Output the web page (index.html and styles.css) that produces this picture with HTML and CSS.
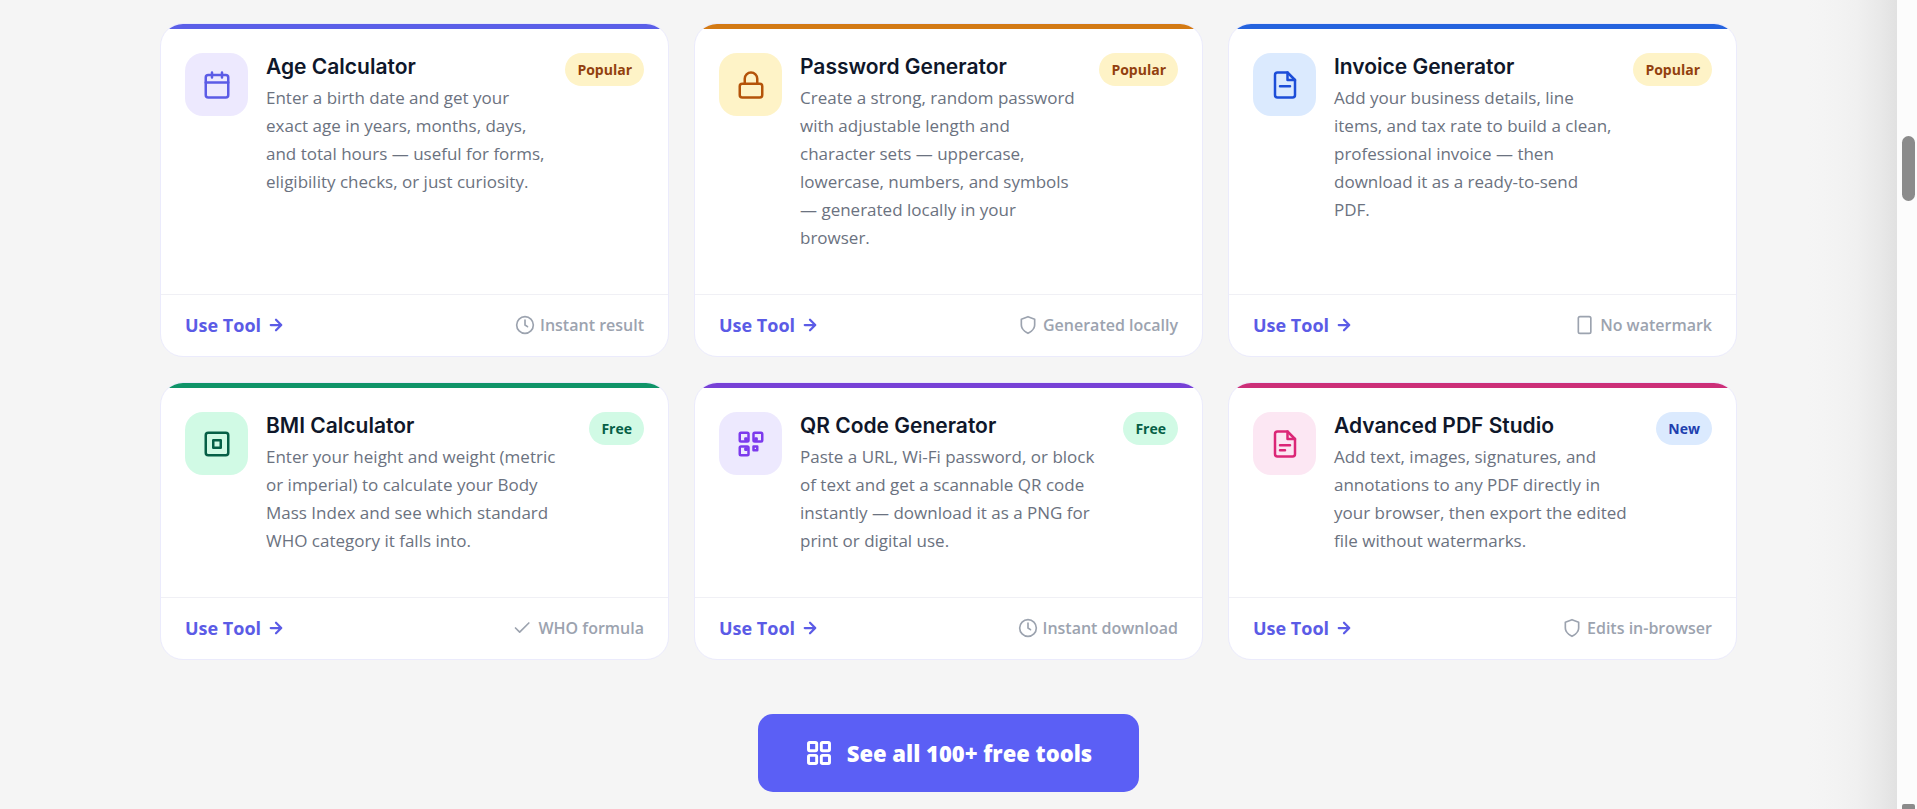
FILE: index.html
```html
<!DOCTYPE html>
<html lang="en">
<head>
  <meta charset="UTF-8">
  <meta name="viewport" content="width=device-width, initial-scale=1.0">
  <title>Free Tools</title>
  <link rel="stylesheet" href="styles.css">
</head>
<body>
  <main class="page">
    <section class="tool-grid">

      <article class="tool-card indigo">
        <div class="tool-body">
          <div class="tool-icon">
            <svg viewBox="0 0 24 24"><rect x="3" y="4" width="18" height="18" rx="2"/><path d="M16 2v4M8 2v4M3 10h18"/></svg>
          </div>
          <div class="tool-text">
            <h3>Age Calculator</h3>
            <p>Enter a birth date and get your exact age in years, months, days, and total hours — useful for forms, eligibility checks, or just curiosity.</p>
          </div>
          <span class="badge popular">Popular</span>
        </div>
        <div class="tool-footer">
          <a href="#" class="use-tool">Use Tool <svg viewBox="0 0 24 24"><path d="M5 12h14M12 5l7 7-7 7"/></svg></a>
          <span class="tool-meta"><svg viewBox="0 0 24 24"><circle cx="12" cy="12" r="10"/><path d="M12 6v6l3 2"/></svg>Instant result</span>
        </div>
      </article>

      <article class="tool-card amber">
        <div class="tool-body">
          <div class="tool-icon">
            <svg viewBox="0 0 24 24"><rect x="3" y="11" width="18" height="11" rx="2"/><path d="M7 11V7a5 5 0 0 1 10 0v4"/></svg>
          </div>
          <div class="tool-text">
            <h3>Password Generator</h3>
            <p>Create a strong, random password with adjustable length and character sets — uppercase, lowercase, numbers, and symbols — generated locally in your browser.</p>
          </div>
          <span class="badge popular">Popular</span>
        </div>
        <div class="tool-footer">
          <a href="#" class="use-tool">Use Tool <svg viewBox="0 0 24 24"><path d="M5 12h14M12 5l7 7-7 7"/></svg></a>
          <span class="tool-meta"><svg viewBox="0 0 24 24"><path d="M12 22s8-4 8-10V5l-8-3-8 3v7c0 6 8 10 8 10z"/></svg>Generated locally</span>
        </div>
      </article>

      <article class="tool-card blue">
        <div class="tool-body">
          <div class="tool-icon">
            <svg viewBox="0 0 24 24"><path d="M14 2H6a2 2 0 0 0-2 2v16a2 2 0 0 0 2 2h12a2 2 0 0 0 2-2V8z"/><path d="M14 2v6h6M8 13h8"/></svg>
          </div>
          <div class="tool-text">
            <h3>Invoice Generator</h3>
            <p>Add your business details, line items, and tax rate to build a clean, professional invoice — then download it as a ready-to-send PDF.</p>
          </div>
          <span class="badge popular">Popular</span>
        </div>
        <div class="tool-footer">
          <a href="#" class="use-tool">Use Tool <svg viewBox="0 0 24 24"><path d="M5 12h14M12 5l7 7-7 7"/></svg></a>
          <span class="tool-meta"><svg viewBox="0 0 24 24"><rect x="4" y="2" width="15" height="20" rx="2"/></svg>No watermark</span>
        </div>
      </article>

      <article class="tool-card green">
        <div class="tool-body">
          <div class="tool-icon">
            <svg viewBox="0 0 24 24"><rect x="3" y="3" width="18" height="18" rx="2"/><path d="M9 9h6v6H9z"/></svg>
          </div>
          <div class="tool-text">
            <h3>BMI Calculator</h3>
            <p>Enter your height and weight (metric or imperial) to calculate your Body Mass Index and see which standard WHO category it falls into.</p>
          </div>
          <span class="badge free">Free</span>
        </div>
        <div class="tool-footer">
          <a href="#" class="use-tool">Use Tool <svg viewBox="0 0 24 24"><path d="M5 12h14M12 5l7 7-7 7"/></svg></a>
          <span class="tool-meta"><svg viewBox="0 0 24 24"><path d="M19 6L8 17l-5-5"/></svg>WHO formula</span>
        </div>
      </article>

      <article class="tool-card violet">
        <div class="tool-body">
          <div class="tool-icon">
            <svg viewBox="0 0 24 24"><rect x="3" y="3" width="7" height="7" rx="1"/><rect x="14" y="3" width="7" height="7" rx="1"/><rect x="3" y="14" width="7" height="7" rx="1"/><rect x="14" y="14" width="3" height="3"/><path d="M7.5 7.5h1v1h-1zM15.5 7.5h1v1h-1zM7.5 15.5h1v1h-1z"/></svg>
          </div>
          <div class="tool-text">
            <h3>QR Code Generator</h3>
            <p>Paste a URL, Wi-Fi password, or block of text and get a scannable QR code instantly — download it as a PNG for print or digital use.</p>
          </div>
          <span class="badge free">Free</span>
        </div>
        <div class="tool-footer">
          <a href="#" class="use-tool">Use Tool <svg viewBox="0 0 24 24"><path d="M5 12h14M12 5l7 7-7 7"/></svg></a>
          <span class="tool-meta"><svg viewBox="0 0 24 24"><circle cx="12" cy="12" r="10"/><path d="M12 6v6l3 2"/></svg>Instant download</span>
        </div>
      </article>

      <article class="tool-card pink">
        <div class="tool-body">
          <div class="tool-icon">
            <svg viewBox="0 0 24 24"><path d="M14 2H6a2 2 0 0 0-2 2v16a2 2 0 0 0 2 2h12a2 2 0 0 0 2-2V8z"/><path d="M14 2v6h6M8 13h8M8 17h4"/></svg>
          </div>
          <div class="tool-text">
            <h3>Advanced PDF Studio</h3>
            <p>Add text, images, signatures, and annotations to any PDF directly in your browser, then export the edited file without watermarks.</p>
          </div>
          <span class="badge new">New</span>
        </div>
        <div class="tool-footer">
          <a href="#" class="use-tool">Use Tool <svg viewBox="0 0 24 24"><path d="M5 12h14M12 5l7 7-7 7"/></svg></a>
          <span class="tool-meta"><svg viewBox="0 0 24 24"><path d="M12 22s8-4 8-10V5l-8-3-8 3v7c0 6 8 10 8 10z"/></svg>Edits in-browser</span>
        </div>
      </article>

    </section>

    <a href="#" class="see-all">
      <svg viewBox="0 0 24 24"><rect x="3" y="3" width="7" height="7" rx="1"/><rect x="14" y="3" width="7" height="7" rx="1"/><rect x="3" y="14" width="7" height="7" rx="1"/><rect x="14" y="14" width="7" height="7" rx="1"/></svg>
      See all 100+ free tools
    </a>
  </main>

  <div class="scroll-track">
    <div class="scroll-thumb"></div>
    <div class="scroll-arrow"></div>
  </div>
</body>
</html>
```
FILE: styles.css
```css
* {
  box-sizing: border-box;
}
body {
  margin: 0;
  display: flex;
  height: 100vh;
  overflow: hidden;
  background: #f5f5f5;
  font-family: "Open Sans", "Noto Sans", sans-serif;
  color: #0f172a;
}
svg {
  fill: none;
  stroke: currentColor;
  stroke-width: 2;
  stroke-linecap: round;
  stroke-linejoin: round;
  flex-shrink: 0;
}
a {
  text-decoration: none;
}

.page {
  flex: 1;
  display: flex;
  flex-direction: column;
  align-items: center;
  gap: 54px;
  padding: 23px 24px 0;
  background: linear-gradient(to left, #e1e1e1, #e9e9e9 18px, #f0f0f0 40px, #f3f3f3 60px, #f5f5f5 90px);
}
.tool-grid {
  display: grid;
  grid-template-columns: repeat(3, 1fr);
  gap: 25px;
  width: 100%;
  max-width: 1577px;
}

/* cards */
.tool-card {
  display: flex;
  flex-direction: column;
  background: #fff;
  border: 1px solid #ebebfc;
  border-radius: 23px;
  overflow: hidden;
}
.tool-card::before {
  content: "";
  height: 5px;
  background: var(--accent);
}
.tool-body {
  flex: 1;
  display: flex;
  align-items: flex-start;
  gap: 18px;
  padding: 24px 24px 42px;
}
.tool-icon {
  display: flex;
  align-items: center;
  justify-content: center;
  width: 63px;
  height: 63px;
  border-radius: 18px;
  flex-shrink: 0;
  background: var(--tint);
  color: var(--icon);
}
.tool-icon svg {
  width: 30px;
  height: 30px;
}
.tool-text {
  flex: 1;
}
.tool-text h3 {
  margin: 0 0 3px;
  font-family: Inter, sans-serif;
  font-size: 21px;
  font-weight: 600;
  line-height: 28px;
}
.tool-text p {
  margin: 0;
  font-size: 17px;
  line-height: 28px;
  color: #6b7280;
}

.indigo { --accent: #5b5fe8; --tint: #ede9fe; --icon: #5b5be6; }
.amber { --accent: #d37a14; --tint: #fef3c7; --icon: #b45309; }
.blue { --accent: #2563de; --tint: #dbeafe; --icon: #1d4ed8; }
.green { --accent: #0f9468; --tint: #d1fae5; --icon: #065f46; }
.violet { --accent: #7741d6; --tint: #ede9fe; --icon: #7c3aed; }
.pink { --accent: #cc2f78; --tint: #fce7f3; --icon: #db2777; }

.badge {
  padding: 0 12px;
  border-radius: 17px;
  font-size: 14px;
  font-weight: 700;
  line-height: 33px;
}
.popular {
  background: #fef3c7;
  color: #92400e;
}
.free {
  background: #d1fae5;
  color: #065f46;
}
.new {
  background: #dbeafe;
  color: #1e40af;
}

.tool-footer {
  display: flex;
  align-items: center;
  justify-content: space-between;
  height: 62px;
  padding: 0 24px 2px;
  border-top: 1px solid #f0f0f5;
}
.use-tool {
  display: flex;
  align-items: center;
  gap: 6px;
  font-size: 18px;
  font-weight: 700;
  color: #5b5be6;
}
.use-tool svg {
  width: 18px;
  height: 18px;
  stroke-width: 3;
}
.tool-meta {
  display: flex;
  align-items: center;
  gap: 5px;
  font-size: 16px;
  font-weight: 600;
  color: #9ca3af;
}
.tool-meta svg {
  width: 20px;
  height: 20px;
}

.see-all {
  display: flex;
  align-items: center;
  gap: 14px;
  flex-shrink: 0;
  height: 78px;
  padding: 0 47px;
  border-radius: 15px;
  background: #5b5ff5;
  color: #fff;
  font-size: 22px;
  font-weight: 800;
}
.see-all svg {
  width: 28px;
  height: 28px;
  stroke-width: 2.5;
}

/* scrollbar */
.scroll-track {
  display: flex;
  flex-direction: column;
  justify-content: space-between;
  align-items: center;
  width: 20px;
  padding: 136px 0 0 3px;
  background: #fcfcfc;
}
.scroll-thumb {
  width: 13px;
  height: 65px;
  border-radius: 7px;
  background: #8b8b8b;
}
.scroll-arrow {
  width: 13px;
  height: 5px;
  border-radius: 2px 2px 0 0;
  background: #8b8b8b;
}
```
